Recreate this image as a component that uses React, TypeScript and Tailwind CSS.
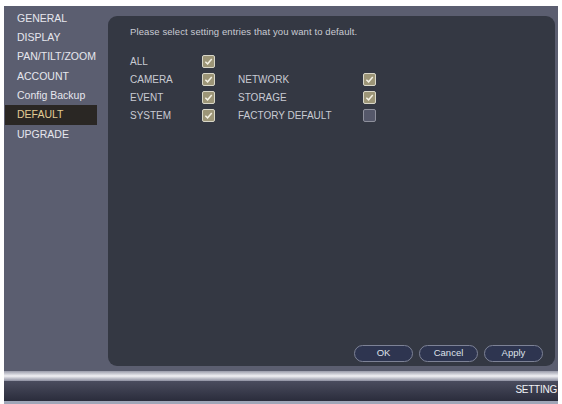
import React from "react";

const MENU = ["GENERAL", "DISPLAY", "PAN/TILT/ZOOM", "ACCOUNT", "Config Backup", "DEFAULT", "UPGRADE"];

function Box({ checked }: { checked: boolean }) {
  return (
    <div
      className={
        "w-[13px] h-[13px] rounded-[2px] border flex items-center justify-center " +
        (checked ? "border-[#d8d6c8] bg-[#9c9577]" : "border-[#8e909c] bg-[#55586a]")
      }
    >
      {checked && (
        <svg width="9" height="9" viewBox="0 0 10 10">
          <path d="M1.5 5.2 L4 7.6 L8.6 2.2" fill="none" stroke="#f4f1e4" strokeWidth="1.6" />
        </svg>
      )}
    </div>
  );
}

const ROWS: [string, boolean, string | null, boolean][] = [
  ["ALL", true, null, false],
  ["CAMERA", true, "NETWORK", true],
  ["EVENT", true, "STORAGE", true],
  ["SYSTEM", true, "FACTORY DEFAULT", false],
];

export default function App() {
  return (
    <div className="w-[562px] h-[404px] bg-white pt-[6px] pl-[4px] pr-[4px] overflow-hidden font-['Liberation_Sans',Arial,sans-serif]">
      <div className="h-full bg-[#5b5e70] flex flex-col">
        <div className="flex flex-1 min-h-0">
          {/* sidebar */}
          <div className="w-[104px] pt-[3px] pl-[1px]">
            {MENU.map((m) => (
              <div
                key={m}
                className={
                  "h-[19.3px] w-[92px] pl-[12px] flex items-center text-[10.5px] whitespace-nowrap " +
                  (m === "DEFAULT" ? "bg-[#2a2724] text-[#e2cc94]" : "text-[#e6e7ee]")
                }
              >
                {m}
              </div>
            ))}
          </div>
          {/* panel */}
          <div className="flex-1 pt-[10px] pr-[3px]">
            <div className="h-full rounded-[9px] bg-[#343843] flex flex-col pl-[22px] pr-[12px] pb-[4px] text-[#c9cbd3]">
              <div className="pt-[9px] text-[9.5px] tracking-[0.1px]">
                Please select setting entries that you want to default.
              </div>
              <div className="mt-[13px] flex flex-col text-[10px]">
                {ROWS.map(([a, ac, b, bc]) => (
                  <div key={a} className="h-[18px] flex items-center">
                    <div className="w-[72px]">{a}</div>
                    <Box checked={ac} />
                    {b && (
                      <>
                        <div className="w-[125px] ml-[23px] whitespace-nowrap">{b}</div>
                        <Box checked={bc} />
                      </>
                    )}
                  </div>
                ))}
              </div>
              <div className="flex-1" />
              <div className="flex justify-end gap-[6px]">
                {["OK", "Cancel", "Apply"].map((t) => (
                  <div
                    key={t}
                    className="w-[59px] h-[17px] rounded-full border border-[#7d8296] bg-[#2e3550] flex items-center justify-center text-[9.5px] text-[#dfe1ea]"
                  >
                    {t}
                  </div>
                ))}
              </div>
            </div>
          </div>
        </div>
        {/* bottom bar */}
        <div className="h-[38px] flex flex-col">
          <div className="h-[5px] bg-[#5b5e70]" />
          <div className="h-[10px] bg-gradient-to-b from-[#9a9cab] via-[#f1f1f5] to-[#8d8fa0]" />
          <div className="flex-1 bg-gradient-to-b from-[#4a4c5e] to-[#2b2d3c] flex justify-end items-start pt-[1px]">
            <span className="text-[10px] text-[#f2f2f6] mr-[1px] tracking-tight">SETTING</span>
          </div>
          <div className="h-[3px] bg-[#9fa6b8]" />
        </div>
      </div>
    </div>
  );
}
